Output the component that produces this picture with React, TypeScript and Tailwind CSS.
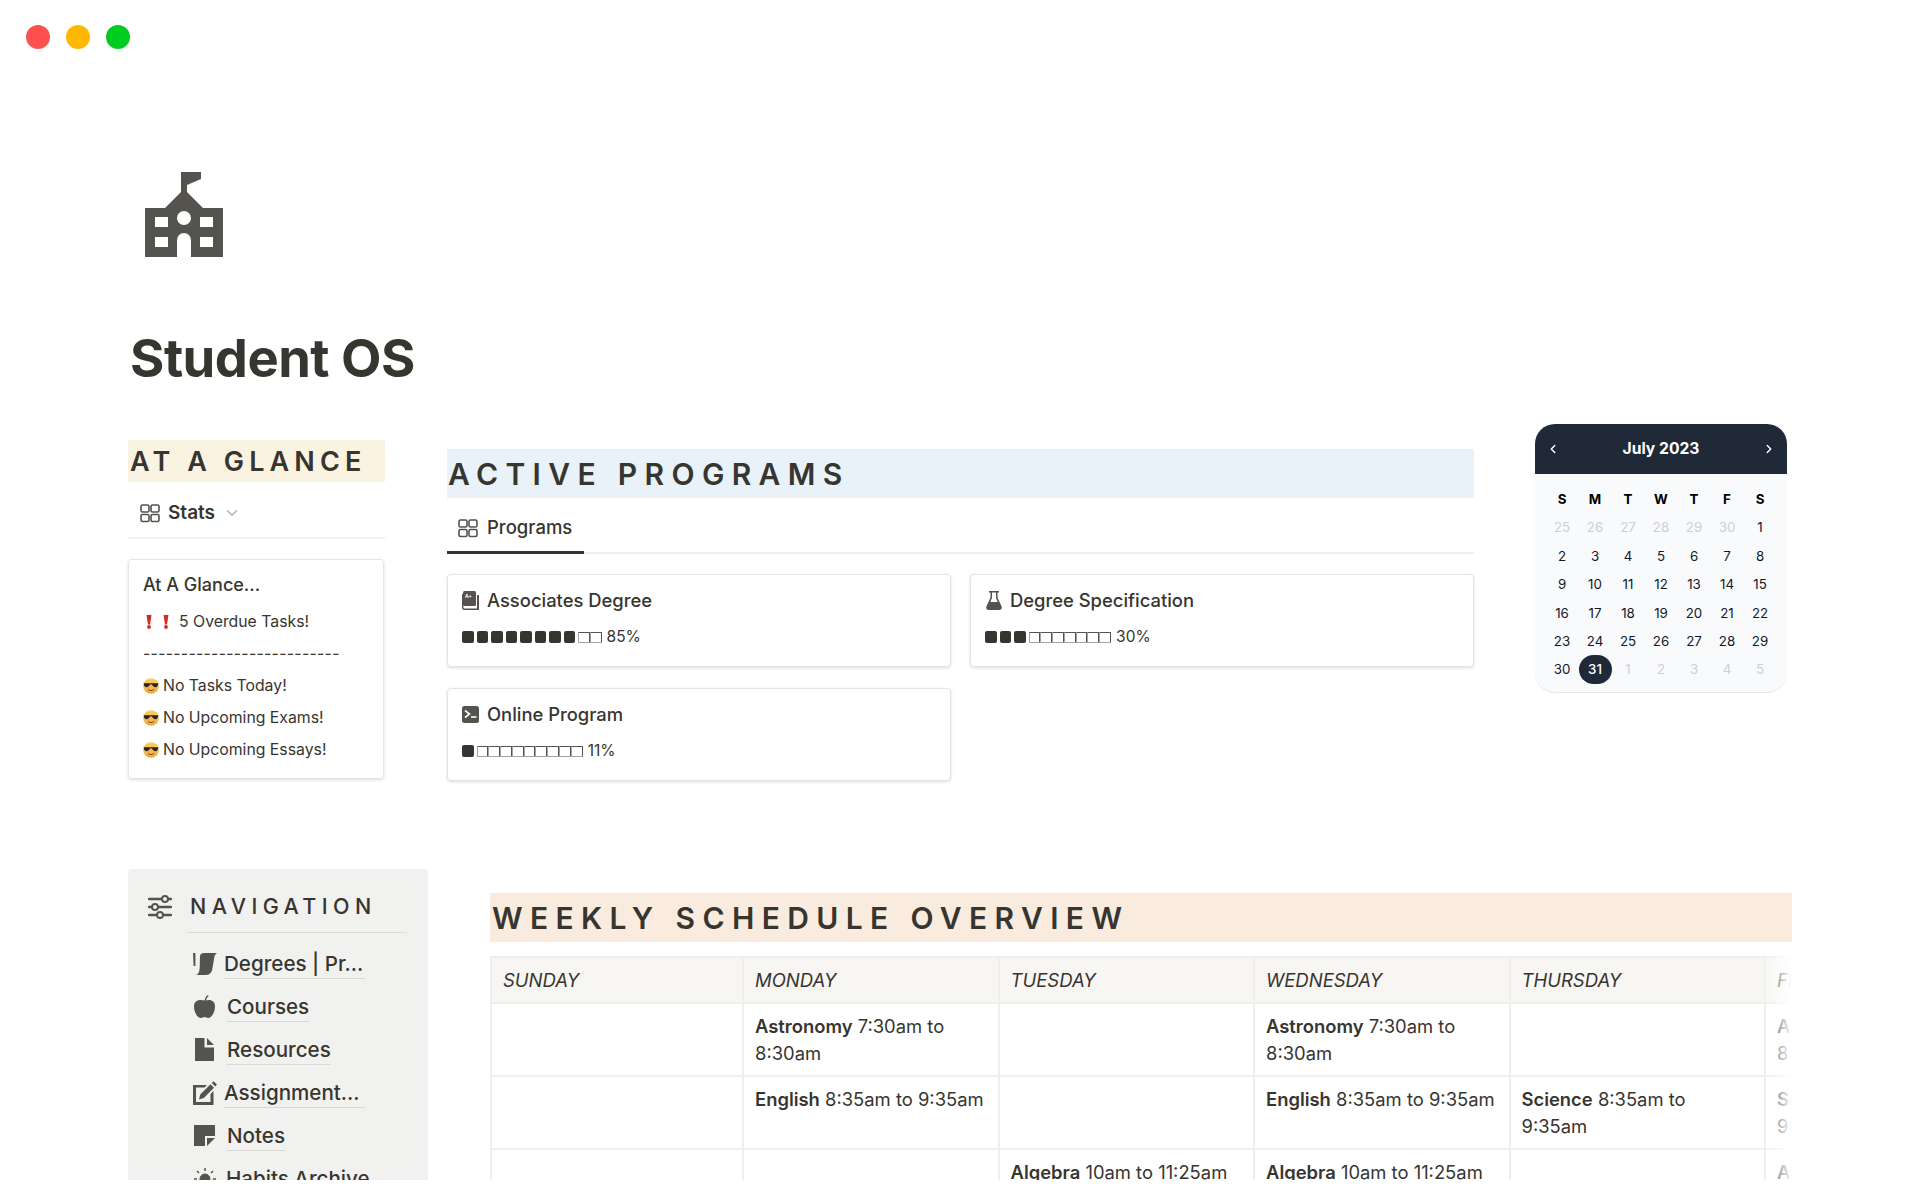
import { ChevronDown, ChevronLeft, ChevronRight } from 'lucide-react';

const ink = '#37352f';

function GalleryIcon({ size = 20 }: { size?: number }) {
  return (
    <svg width={size} height={size} viewBox="0 0 20 20" fill="none" stroke="#55534e" strokeWidth="1.6">
      <rect x="1" y="2" width="8" height="7" rx="1.5" />
      <rect x="11" y="2" width="8" height="7" rx="1.5" />
      <rect x="1" y="11.5" width="8" height="7" rx="1.5" />
      <rect x="11" y="11.5" width="8" height="7" rx="1.5" />
    </svg>
  );
}

function SchoolIcon() {
  return (
    <svg width="78" height="85" viewBox="0 0 78 85" fill="#55534e">
      <path
        fillRule="evenodd"
        d="M36 0H56V7L42 13V20L58 36H78V85H46V68A7 7 0 0 0 32 68V85H0V36H20L36 20ZM10 45V55H23V45ZM55 45V55H68V45ZM10 65V75H23V65ZM55 65V75H68V65ZM39 39A7 7 0 1 0 39 53 7 7 0 1 0 39 39Z"
      />
    </svg>
  );
}

function CoolFace() {
  return (
    <svg width="16" height="16" viewBox="0 0 16 16" className="shrink-0">
      <defs>
        <linearGradient id="face" x1="0" y1="0" x2="0" y2="1">
          <stop offset="0" stopColor="#f9cf62" />
          <stop offset="1" stopColor="#f0a93c" />
        </linearGradient>
      </defs>
      <circle cx="8" cy="8" r="7.8" fill="url(#face)" />
      <path d="M0.6 5.2H15.4L14.8 7.6C14.2 9.6 11 9.8 9.8 7.8L9 6.6H7L6.2 7.8C5 9.8 1.8 9.6 1.2 7.6Z" fill="#26241f" />
      <path d="M5 11.4C6.5 13 9.5 13 11 11.4" stroke="#7a4a12" strokeWidth="1" fill="none" />
    </svg>
  );
}

function Bang() {
  return (
    <svg width="6" height="14" viewBox="0 0 6 14" className="shrink-0">
      <path d="M0.5 0H5.5L4 9.5H2Z" fill="#d8281f" />
      <circle cx="3" cy="12" r="1.9" fill="#d8281f" />
    </svg>
  );
}

function Progress({ filled, pct }: { filled: number; pct: string }) {
  const boxes = Array.from({ length: 10 }, (_, i) => i < filled);
  return (
    <div className="flex items-center text-[15.5px] leading-5 text-[#37352f]">
      <div className="flex items-center">
        {boxes.map((on, i) =>
          on ? (
            <span key={i} className="mr-[3px] h-[12px] w-[11.5px] rounded-[2px] bg-[#37352f]" />
          ) : (
            <span
              key={i}
              className="h-[11px] w-[11.8px] rounded-[1px] border border-[#55534e] border-b-[#a5a4a0] border-l-[#a5a4a0] bg-white"
            />
          ),
        )}
      </div>
      <span className="ml-[5px]">{pct}</span>
    </div>
  );
}

function ProgramCard({
  icon,
  title,
  filled,
  pct,
}: {
  icon: React.ReactNode;
  title: string;
  filled: number;
  pct: string;
}) {
  return (
    <div className="h-[93px] rounded-[4px] border border-[#e6e5e3] bg-white px-[14px] pt-[13px] shadow-[0_1px_3px_rgba(15,15,15,0.14)]">
      <div className="flex h-[25px] items-center gap-[8px] text-[18.4px] font-medium text-[#37352f]">
        <span className="flex w-[17px] justify-center">{icon}</span>
        {title}
      </div>
      <div className="mt-[14px]">
        <Progress filled={filled} pct={pct} />
      </div>
    </div>
  );
}

function CalendarCard() {
  const heads = ['S', 'M', 'T', 'W', 'T', 'F', 'S'];
  const days = [
    ...[25, 26, 27, 28, 29, 30].map((d) => ({ d, off: true })),
    ...Array.from({ length: 31 }, (_, i) => ({ d: i + 1, off: false })),
    ...[1, 2, 3, 4, 5].map((d) => ({ d, off: true })),
  ];
  return (
    <div className="w-[252px] overflow-hidden rounded-[20px] border-b border-[#e5e7eb] bg-[#f9fafb]">
      <div className="flex h-[50px] items-center justify-between bg-[#1f2937] px-[11px] text-white">
        <ChevronLeft size={14} strokeWidth={2.5} />
        <span className="text-[15.7px] font-bold">July 2023</span>
        <ChevronRight size={14} strokeWidth={2.5} />
      </div>
      <div className="grid grid-cols-7 px-[10.5px] pt-[11px] pb-[8px] text-center text-[13.3px] leading-[28.4px]">
        {heads.map((h, i) => (
          <div key={i} className="font-bold text-black">
            {h}
          </div>
        ))}
        {days.map(({ d, off }, i) => (
          <div key={i} className="flex justify-center">
            {d === 31 ? (
              <span className="w-[33px] rounded-full bg-[#1f2937] font-medium text-white">31</span>
            ) : (
              <span className={off ? 'text-[#cbd0d6]' : 'text-[#111827]'}>{d}</span>
            )}
          </div>
        ))}
      </div>
    </div>
  );
}

function NavItem({ icon, label, textClass }: { icon: React.ReactNode; label: string; textClass: string }) {
  return (
    <div className="flex h-[43px] items-center">
      <span className="flex w-[31px] shrink-0 justify-center">{icon}</span>
      <span className={`${textClass} border-b border-[#d9d8d5] text-[20.6px] leading-[29px] font-medium text-[#37352f]`}>
        {label}
      </span>
    </div>
  );
}

const rows = [
  [
    null,
    ['Astronomy', ' 7:30am to 8:30am'],
    null,
    ['Astronomy', ' 7:30am to 8:30am'],
    null,
    ['Astronomy', ' 7:30am to 8:30am'],
  ],
  [
    null,
    ['English', ' 8:35am to 9:35am'],
    null,
    ['English', ' 8:35am to 9:35am'],
    ['Science', ' 8:35am to 9:35am'],
    ['Science', ' 8:35am to 9:35am'],
  ],
  [
    null,
    null,
    ['Algebra', ' 10am to 11:25am'],
    ['Algebra', ' 10am to 11:25am'],
    null,
    ['Algebra', ' 10am to 11:25am'],
  ],
];

const cols = ['w-[252px]', 'w-[255.5px]', 'w-[255.5px]', 'w-[255.5px]', 'w-[255.5px]', 'w-[255.5px]'];
const heads = ['SUNDAY', 'MONDAY', 'TUESDAY', 'WEDNESDAY', 'THURSDAY', 'FRIDAY'];

function ScheduleTable() {
  return (
    <div className="relative mt-[14px] h-[240px] overflow-hidden">
      <div className="w-[1400px] border-t-2 border-l-2 border-[#eeeeed]">
        <div className="flex h-[46px] bg-[#f7f6f3]">
          {heads.map((h, i) => (
            <div
              key={h}
              className={`${cols[i]} shrink-0 border-r-2 border-b-2 border-[#eeeeed] px-[11px] pt-[9px] text-[18.5px] leading-[27px] font-normal text-[#37352f] italic`}
            >
              {h}
            </div>
          ))}
        </div>
        {rows.map((row, r) => (
          <div key={r} className="flex h-[73px]">
            {row.map((cell, i) => (
              <div
                key={i}
                className={`${cols[i]} shrink-0 border-r-2 border-b-2 border-[#eeeeed] px-[11px] pt-[9px] text-[18.4px] leading-[27px] text-[#37352f]`}
              >
                {cell && (
                  <>
                    <span className="font-semibold">{cell[0]}</span>
                    {cell[1]}
                  </>
                )}
              </div>
            ))}
          </div>
        ))}
      </div>
      <div className="absolute top-0 right-0 bottom-0 w-[30px] bg-gradient-to-r from-white/0 to-white" />
    </div>
  );
}

export default function App() {
  return (
    <div className="h-[1200px] w-[1920px] overflow-hidden bg-white font-['Inter',sans-serif] text-[#37352f]">
      <div className="h-[1180px] overflow-hidden">
        {/* window buttons */}
        <div className="flex gap-4 pt-[25px] pl-[26px]">
          <span className="h-6 w-6 rounded-full bg-[#ff5050]" />
          <span className="h-6 w-6 rounded-full bg-[#ffb700]" />
          <span className="h-6 w-6 rounded-full bg-[#00cc1f]" />
        </div>

        <div className="pt-[123px] pl-[145px]">
          <SchoolIcon />
        </div>

        <h1 className="mt-[70px] pl-[130px] text-[52.5px] leading-[62px] font-bold tracking-[-0.5px]" style={{ color: ink }}>
          Student OS
        </h1>

        {/* top row */}
        <div className="mt-[35px] flex pl-[128px]">
          <div className="w-[257px] pt-[16px]">
            <div className="flex h-[42px] items-center bg-[#fbf3e1] pt-[3px] pl-[2px] text-[27px] font-semibold tracking-[5.1px]">
              AT A GLANCE
            </div>
            <div className="flex h-[57px] items-center gap-[8px] border-b-2 border-[#efefed] pt-[7px] pl-[12px] text-[19px] font-semibold">
              <GalleryIcon />
              Stats
              <ChevronDown size={18} className="text-[#b5b4b0]" />
            </div>
            <div className="mt-[20px] h-[220px] w-[256px] rounded-[4px] border border-[#e6e5e3] px-[14px] pt-[12px] shadow-[0_1px_3px_rgba(15,15,15,0.14)]">
              <div className="text-[18px] leading-[26px] font-medium">At A Glance...</div>
              <div className="mt-[12px] flex h-[24px] items-center text-[15.8px]">
                <span className="mr-[10px] ml-[3px] flex gap-[11px]">
                  <Bang />
                  <Bang />
                </span>
                5 Overdue Tasks!
              </div>
              <div className="mt-[8px] h-[24px] text-[15.8px] leading-[24px] tracking-[0.3px]">--------------------------</div>
              <div className="mt-[8px] flex flex-col gap-[8px] text-[15.8px] leading-[24px]">
                <div className="flex items-center gap-[4px]">
                  <CoolFace />
                  No Tasks Today!
                </div>
                <div className="flex items-center gap-[4px]">
                  <CoolFace />
                  No Upcoming Exams!
                </div>
                <div className="flex items-center gap-[4px]">
                  <CoolFace />
                  No Upcoming Essays!
                </div>
              </div>
            </div>
          </div>

          <div className="ml-[62px] w-[1027px] pt-[25px]">
            <div className="flex h-[49px] items-center bg-[#e9f2f9] pt-[2px] pl-[1px] text-[30px] font-semibold tracking-[7.35px]">
              ACTIVE PROGRAMS
            </div>
            <div className="flex h-[56px] items-end border-b-2 border-[#efefed]">
              <div className="-mb-[2px] flex h-[44px] w-[137px] items-center gap-[9px] border-b-[3px] border-[#37352f] pb-[6px] pl-[11px] text-[18.5px] font-medium">
                <GalleryIcon />
                Programs
              </div>
            </div>
            <div className="mt-[20px] grid grid-cols-2 gap-x-[19px] gap-y-[21px]">
              <ProgramCard
                title="Associates Degree"
                filled={8}
                pct="85%"
                icon={
                  <svg width="17" height="19" viewBox="0 0 17 19" fill="#55534e">
                    <rect x="1" y="0" width="13" height="15" rx="1.5" />
                    <path d="M0 3V16.5C0 17.9 1 19 2.4 19H16.5V17.6H3C2 17.6 1.4 17 1.4 16V3Z" />
                    <path d="M15 4H17V19H15Z" />
                    <text x="3" y="7" fontSize="5" fontWeight="700" fill="#fff">
                      A+
                    </text>
                  </svg>
                }
              />
              <ProgramCard
                title="Degree Specification"
                filled={3}
                pct="30%"
                icon={
                  <svg width="16" height="19" viewBox="0 0 16 19" fill="#55534e">
                    <path d="M3 0H13V1.6H11.5V6.5L15.6 15.6C16.3 17.2 15.2 19 13.4 19H2.6C0.8 19 -0.3 17.2 0.4 15.6L4.5 6.5V1.6H3ZM6 1.6V7L4.2 11H11.8L10 7V1.6Z" fillRule="evenodd" />
                  </svg>
                }
              />
              <ProgramCard
                title="Online Program"
                filled={1}
                pct="11%"
                icon={
                  <svg width="17" height="17" viewBox="0 0 17 17">
                    <rect width="17" height="17" rx="2.5" fill="#55534e" />
                    <path d="M3 4.5L7.5 8L3 11.5" stroke="#fff" strokeWidth="1.6" fill="none" />
                    <path d="M9 11H14.5" stroke="#fff" strokeWidth="1.6" />
                  </svg>
                }
              />
            </div>
          </div>

          <div className="ml-[61px]">
            <CalendarCard />
          </div>
        </div>

        {/* bottom row */}
        <div className="mt-[88px] flex pl-[128px]">
          <div className="h-[340px] w-[300px] rounded-[4px] bg-[#f1f1ef]">
            <div className="flex h-[63px] items-center pt-[12px] pl-[20px]">
              <svg width="24" height="25" viewBox="0 0 24 25" fill="none" stroke="#55534e" strokeWidth="2.4" strokeLinecap="round">
                <path d="M1 5H13M21 5H23M1 13H3M11 13H23M1 21H8M16 21H23" />
                <circle cx="17" cy="5" r="3" strokeWidth="2" />
                <circle cx="7" cy="13" r="3" strokeWidth="2" />
                <circle cx="12" cy="21" r="3" strokeWidth="2" />
              </svg>
              <span className="ml-[18px] text-[21.5px] font-medium tracking-[5.4px]">NAVIGATION</span>
            </div>
            <div className="mr-[21px] ml-[59px] border-b border-[#dcdbd8]" />
            <div className="mt-[9px] pl-[61px]">
              <NavItem
                textClass="ml-[4px] w-[141px]"
                label="Degrees | Pr..."
                icon={
                  <svg width="24" height="22" viewBox="0 0 24 22" fill="#55534e">
                    <path d="M0 0H2.4V13H0.6ZM7 3C7 1 9 0 11 0H24C22 1 21.5 3 21 6L19.5 15C19 19 17 22 13 22H3C6 21 6.5 18 6.7 14Z" />
                  </svg>
                }
              />
              <NavItem
                textClass="ml-[7px]"
                label="Courses"
                icon={
                  <svg width="21" height="23" viewBox="0 0 21 23" fill="#55534e">
                    <path d="M10.6 5.6C11 3.2 12 1.2 14 0L14.6 1C13.2 2.2 12.4 3.6 12 5.6C14 4.6 21 4.4 21 11.6C21 17.6 17.4 23 14.4 23C12.6 23 11.8 22 10.5 22C9.2 22 8.4 23 6.6 23C3.6 23 0 17.6 0 11.6C0 4.4 7 4.6 10.6 5.6Z" />
                  </svg>
                }
              />
              <NavItem
                textClass="ml-[7px]"
                label="Resources"
                icon={
                  <svg width="19" height="23" viewBox="0 0 19 23" fill="#55534e">
                    <path d="M0 0H9.5V9.5H19V23H0ZM12 0L19 7H12Z" />
                  </svg>
                }
              />
              <NavItem
                textClass="ml-[4px] w-[141px]"
                label="Assignment..."
                icon={
                  <svg width="24" height="24" viewBox="0 0 24 24" fill="#55534e">
                    <path d="M0 4H14L11.5 6.5H3V21H17.5V13L20.5 10V24H0Z" />
                    <path d="M6 18.5L7.2 13.5L17.5 3.2L21 6.7L10.8 17ZM18.8 2L20.6 0.2L24 3.6L22.2 5.4Z" />
                  </svg>
                }
              />
              <NavItem
                textClass="ml-[7px]"
                label="Notes"
                icon={
                  <svg width="21" height="21" viewBox="0 0 21 21" fill="#55534e">
                    <path d="M0 0H21V11H11V21H0ZM13 13H21L13 21Z" />
                  </svg>
                }
              />
              <NavItem
                textClass="ml-[6px]"
                label="Habits Archive"
                icon={
                  <svg width="22" height="22" viewBox="0 0 22 22" fill="#55534e" stroke="#55534e">
                    <circle cx="11" cy="11" r="5" />
                    <path d="M11 0V3M3 3L5 5M19 3L17 5M0 11H3M19 11H22" strokeWidth="1.5" />
                  </svg>
                }
              />
            </div>
          </div>

          <div className="ml-[62px] w-[1302px] pt-[24px]">
            <div className="flex h-[49px] items-center bg-[#f9ecdf] pt-[2px] pl-[2px] text-[30px] font-semibold tracking-[7.38px]">
              WEEKLY SCHEDULE OVERVIEW
            </div>
            <ScheduleTable />
          </div>
        </div>
      </div>
    </div>
  );
}
